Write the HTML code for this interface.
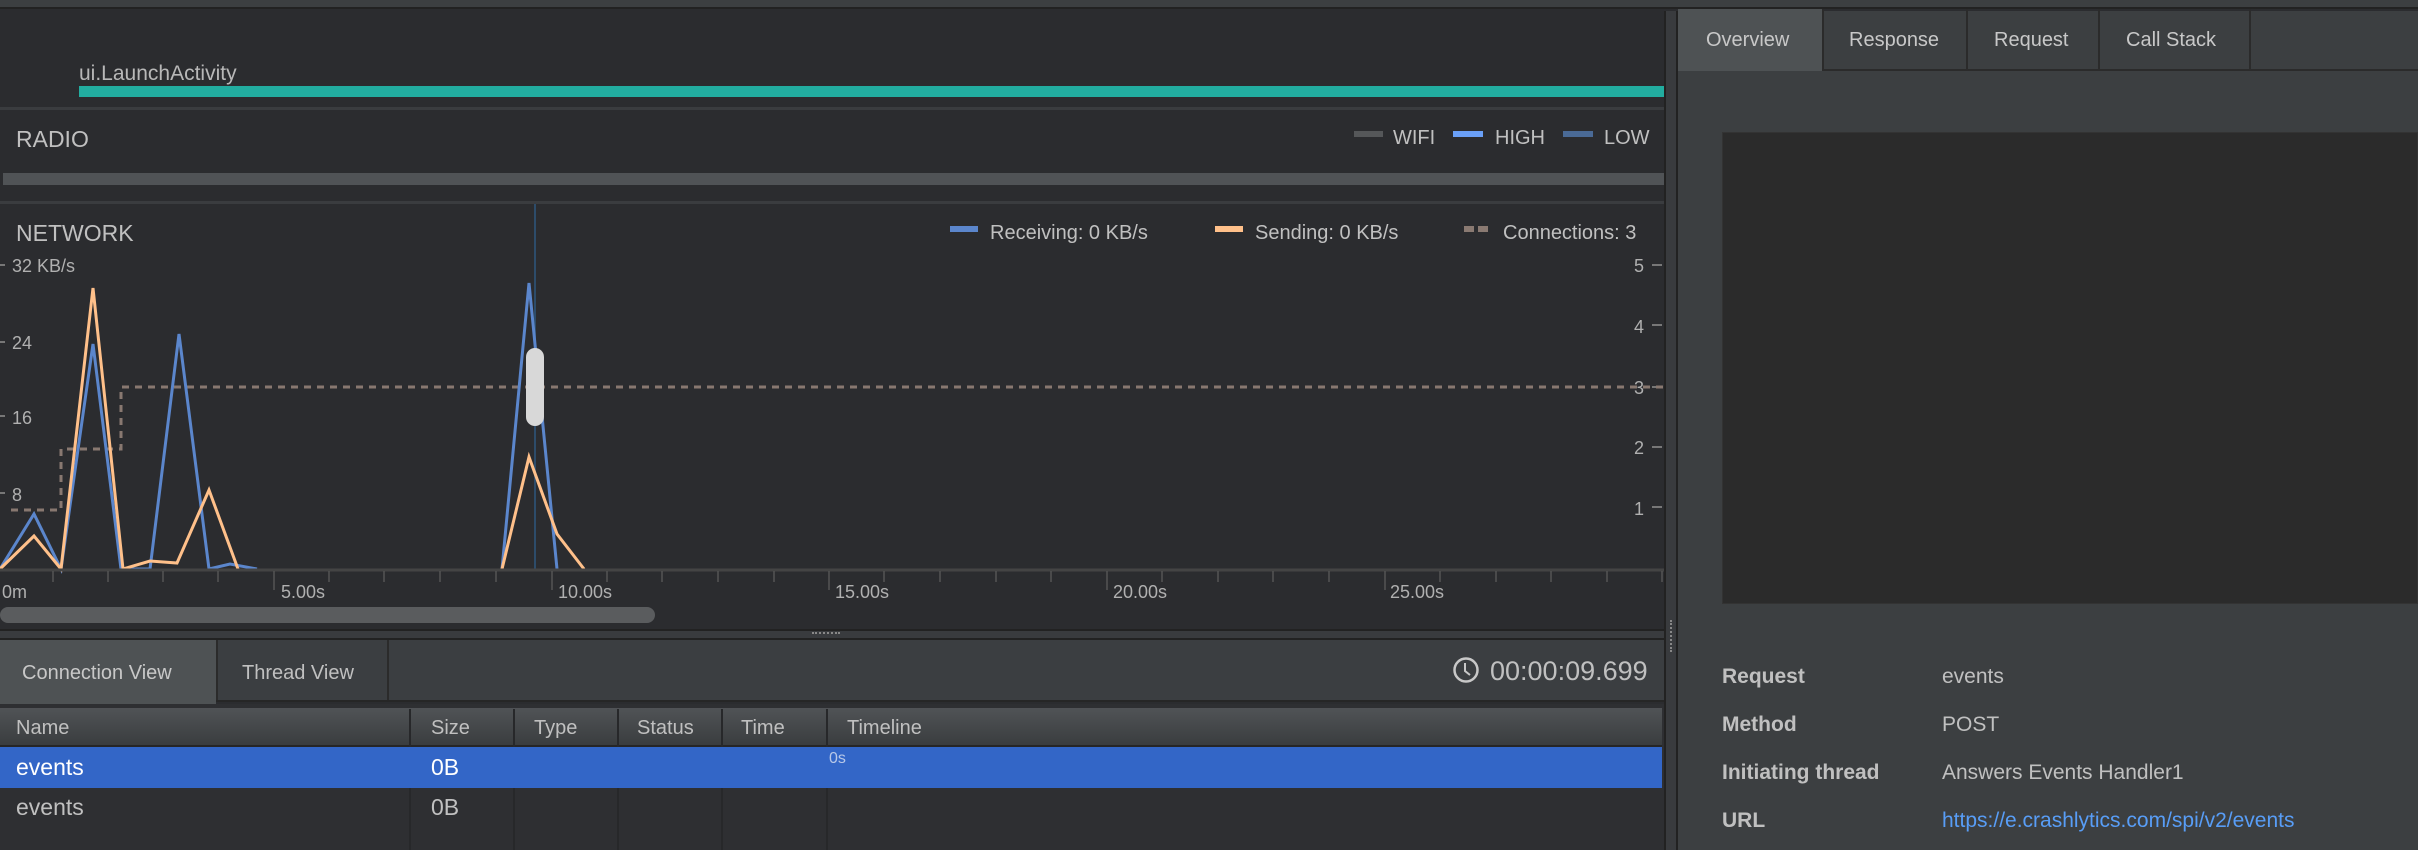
<!DOCTYPE html>
<html><head><meta charset="utf-8"><style>
*{margin:0;padding:0;box-sizing:border-box}
body{width:2418px;height:850px;overflow:hidden;background:#2b2c2f;font-family:"Liberation Sans","DejaVu Sans",sans-serif;color:#bbbbbb;position:relative}
.a{position:absolute}
</style></head><body>
<div class="a" style="left:0;top:0;width:2418px;height:9px;background:#3c3f41;border-bottom:2px solid #222"></div>
<div class="a" style="left:0;top:11px;width:1665px;height:97px;background:#2b2c2f"></div>
<div class="a" style="left:79px;top:62px;font-size:21px;color:#b8b8b8">ui.LaunchActivity</div>
<div class="a" style="left:79px;top:86px;width:1585px;height:11px;background:#22ada0"></div>
<div class="a" style="left:0;top:107px;width:1665px;height:3px;background:#3a3c3f"></div>
<div class="a" style="left:16px;top:126px;font-size:23px;color:#c0c0c0">RADIO</div>
<div class="a" style="left:1354px;top:131px;width:29px;height:6px;background:#555759"></div>
<div class="a" style="left:1393px;top:127px;font-size:20px;color:#c0c0c0">WIFI</div>
<div class="a" style="left:1453px;top:131px;width:30px;height:6px;background:#6aa0f8"></div>
<div class="a" style="left:1495px;top:127px;font-size:20px;color:#c0c0c0">HIGH</div>
<div class="a" style="left:1563px;top:131px;width:30px;height:6px;background:#4a6a96"></div>
<div class="a" style="left:1604px;top:127px;font-size:20px;color:#c0c0c0">LOW</div>
<div class="a" style="left:3px;top:173px;width:1661px;height:12px;background:#505356"></div>
<div class="a" style="left:0;top:201px;width:1665px;height:3px;background:#3a3c3f"></div>
<div class="a" style="left:16px;top:220px;font-size:23px;color:#c0c0c0">NETWORK</div>
<div class="a" style="left:950px;top:226px;width:28px;height:6px;background:#5b86cc"></div>
<div class="a" style="left:990px;top:222px;font-size:20px;color:#c0c0c0">Receiving: 0 KB/s</div>
<div class="a" style="left:1215px;top:226px;width:28px;height:6px;background:#ffc08a"></div>
<div class="a" style="left:1255px;top:222px;font-size:20px;color:#c0c0c0">Sending: 0 KB/s</div>
<div class="a" style="left:1464px;top:226px;width:10px;height:6px;background:#8a7a72"></div>
<div class="a" style="left:1478px;top:226px;width:10px;height:6px;background:#8a7a72"></div>
<div class="a" style="left:1503px;top:222px;font-size:20px;color:#c0c0c0">Connections: 3</div>
<svg class="a" style="left:0;top:204px" width="1665" height="425" viewBox="0 204 1665 425" font-family="Liberation Sans,sans-serif" font-size="18" fill="#b0b0b0">
<line x1="535" y1="204" x2="535" y2="569" stroke="#2d4c6a" stroke-width="2"/>
<g stroke="#777" stroke-width="2">
<line x1="0" y1="265" x2="5" y2="265"/><line x1="0" y1="342" x2="5" y2="342"/><line x1="0" y1="416" x2="5" y2="416"/><line x1="0" y1="493" x2="5" y2="493"/>
<line x1="1652" y1="265" x2="1662" y2="265"/><line x1="1652" y1="325" x2="1662" y2="325"/><line x1="1652" y1="387" x2="1662" y2="387"/><line x1="1652" y1="447" x2="1662" y2="447"/><line x1="1652" y1="507" x2="1662" y2="507"/>
</g>
<text x="12" y="272">32 KB/s</text><text x="12" y="349">24</text><text x="12" y="424">16</text><text x="12" y="501">8</text>
<text x="1634" y="272">5</text><text x="1634" y="333">4</text><text x="1634" y="394">3</text><text x="1634" y="454">2</text><text x="1634" y="515">1</text>
<polyline fill="none" stroke="#887870" stroke-width="3" stroke-dasharray="7,6" points="11,510 61,510 61,449 121,449 121,387 1665,387"/>
<polyline fill="none" stroke="#5b86cc" stroke-width="3" points="0,569 34,514 61,569 93,344 121,569 150,569 179,334 209,569 230,564 257,569"/>
<polyline fill="none" stroke="#5b86cc" stroke-width="3" points="502,569 529,283 557,569"/>
<polyline fill="none" stroke="#ffc08a" stroke-width="3" points="0,569 34,536 61,569 93,288 123,569 150,561 177,563 209,490 238,569"/>
<polyline fill="none" stroke="#ffc08a" stroke-width="3" points="502,569 529,457 557,534 584,569"/>
<rect x="526" y="348" width="18" height="78" rx="9" fill="#d8d8d8"/>
<line x1="0" y1="570" x2="1665" y2="570" stroke="#444" stroke-width="3"/>
<g stroke="#555" stroke-width="1.5">
<line x1="53" y1="571" x2="53" y2="582"/><line x1="108" y1="571" x2="108" y2="582"/><line x1="163" y1="571" x2="163" y2="582"/><line x1="218" y1="571" x2="218" y2="582"/><line x1="274" y1="571" x2="274" y2="590"/>
<line x1="329" y1="571" x2="329" y2="582"/><line x1="384" y1="571" x2="384" y2="582"/><line x1="440" y1="571" x2="440" y2="582"/><line x1="496" y1="571" x2="496" y2="582"/><line x1="552" y1="571" x2="552" y2="590"/>
<line x1="607" y1="571" x2="607" y2="582"/><line x1="662" y1="571" x2="662" y2="582"/><line x1="718" y1="571" x2="718" y2="582"/><line x1="774" y1="571" x2="774" y2="582"/><line x1="829" y1="571" x2="829" y2="590"/>
<line x1="884" y1="571" x2="884" y2="582"/><line x1="940" y1="571" x2="940" y2="582"/><line x1="996" y1="571" x2="996" y2="582"/><line x1="1051" y1="571" x2="1051" y2="582"/><line x1="1107" y1="571" x2="1107" y2="590"/>
<line x1="1162" y1="571" x2="1162" y2="582"/><line x1="1218" y1="571" x2="1218" y2="582"/><line x1="1273" y1="571" x2="1273" y2="582"/><line x1="1329" y1="571" x2="1329" y2="582"/><line x1="1385" y1="571" x2="1385" y2="590"/>
<line x1="1440" y1="571" x2="1440" y2="582"/><line x1="1496" y1="571" x2="1496" y2="582"/><line x1="1551" y1="571" x2="1551" y2="582"/><line x1="1607" y1="571" x2="1607" y2="582"/><line x1="1662" y1="571" x2="1662" y2="582"/>
</g>
<text x="2" y="598">0m</text><text x="281" y="598">5.00s</text><text x="558" y="598">10.00s</text><text x="835" y="598">15.00s</text><text x="1113" y="598">20.00s</text><text x="1390" y="598">25.00s</text>
<rect x="0" y="607" width="655" height="16" rx="8" fill="#5a5c5e"/>
</svg>
<div class="a" style="left:0;top:629px;width:1665px;height:11px;background:#393b3e;border-top:2px solid #222;border-bottom:2px solid #222"></div>
<div class="a" style="left:812px;top:632px;width:28px;height:4px;border-top:2px dotted #888"></div>
<div class="a" style="left:0;top:640px;width:1665px;height:62px;background:#3b3e41;border-bottom:2px solid #262626"></div>
<div class="a" style="left:0;top:640px;width:216px;height:66px;background:#4e5254;font-size:20px;color:#c8c8c8;padding:22px 0 0 22px">Connection View</div>
<div class="a" style="left:216px;top:640px;width:173px;height:60px;border-left:2px solid #2b2b2b;border-right:2px solid #2b2b2b;font-size:20px;color:#c0c0c0;padding:22px 0 0 24px">Thread View</div>
<svg class="a" style="left:1452px;top:656px" width="28" height="28"><circle cx="14" cy="14" r="11.5" fill="none" stroke="#c8c8c8" stroke-width="2.5"/><path d="M13 7 V15 L18 19" fill="none" stroke="#c8c8c8" stroke-width="2"/></svg>
<div class="a" style="left:1490px;top:656px;font-size:27px;color:#c0c0c0">00:00:09.699</div>
<div class="a" style="left:0;top:704px;width:1665px;height:146px;background:#2e2f32"></div>
<div class="a" style="left:0;top:708px;width:1662px;height:39px;background:linear-gradient(#505356,#3a3d3f);border-bottom:2px solid #262626"></div>
<div class="a" style="left:409px;top:709px;width:2px;height:141px;background:#27282a"></div>
<div class="a" style="left:513px;top:709px;width:2px;height:141px;background:#27282a"></div>
<div class="a" style="left:617px;top:709px;width:2px;height:141px;background:#27282a"></div>
<div class="a" style="left:721px;top:709px;width:2px;height:141px;background:#27282a"></div>
<div class="a" style="left:826px;top:709px;width:2px;height:141px;background:#27282a"></div>
<div class="a" style="left:0;top:747px;width:1662px;height:41px;background:#3366c7"></div>
<div class="a" style="top:717px;font-size:20px;color:#c0c0c0;left:16px">Name</div>
<div class="a" style="top:717px;font-size:20px;color:#c0c0c0;left:431px">Size</div>
<div class="a" style="top:717px;font-size:20px;color:#c0c0c0;left:534px">Type</div>
<div class="a" style="top:717px;font-size:20px;color:#c0c0c0;left:637px">Status</div>
<div class="a" style="top:717px;font-size:20px;color:#c0c0c0;left:741px">Time</div>
<div class="a" style="top:717px;font-size:20px;color:#c0c0c0;left:847px">Timeline</div>
<div class="a" style="top:754px;font-size:23px;color:#fff;left:16px">events</div>
<div class="a" style="top:754px;font-size:23px;color:#fff;left:431px">0B</div>
<div class="a" style="top:750px;font-size:16px;color:#b8c8e8;left:829px">0s</div>
<div class="a" style="top:794px;font-size:23px;color:#c0c0c0;left:16px">events</div>
<div class="a" style="top:794px;font-size:23px;color:#c0c0c0;left:431px">0B</div>
<div class="a" style="left:1664px;top:11px;width:14px;height:839px;background:#393b3e;border-left:2px solid #222;border-right:2px solid #222"></div>
<div class="a" style="left:1670px;top:620px;width:3px;height:32px;border-left:2px dotted #888"></div>
<div class="a" style="left:1678px;top:11px;width:740px;height:839px;background:#3c3f41"></div>
<div class="a" style="left:1678px;top:69px;width:740px;height:2px;background:#2b2b2b"></div>
<div class="a" style="left:1678px;top:9px;width:144px;height:62px;background:#4e5254;font-size:20px;color:#c8c8c8;padding:20px 0 0 28px">Overview</div>
<div class="a" style="left:1822px;top:9px;width:146px;height:60px;border-left:2px solid #2b2b2b;border-right:2px solid #2b2b2b;font-size:20px;color:#c8c8c8;padding:20px 0 0 25px">Response</div>
<div class="a" style="left:1968px;top:9px;width:132px;height:60px;border-right:2px solid #2b2b2b;font-size:20px;color:#c8c8c8;padding:20px 0 0 26px">Request</div>
<div class="a" style="left:2100px;top:9px;width:151px;height:60px;border-right:2px solid #2b2b2b;font-size:20px;color:#c8c8c8;padding:20px 0 0 26px">Call Stack</div>
<div class="a" style="left:1722px;top:132px;width:696px;height:472px;background:#2b2b2b;border:1px solid #333"></div>
<div class="a" style="left:1722px;top:665px;font-size:21px;font-weight:bold;color:#c0c0c0">Request</div>
<div class="a" style="left:1722px;top:713px;font-size:21px;font-weight:bold;color:#c0c0c0">Method</div>
<div class="a" style="left:1722px;top:761px;font-size:21px;font-weight:bold;color:#c0c0c0">Initiating thread</div>
<div class="a" style="left:1722px;top:809px;font-size:21px;font-weight:bold;color:#c0c0c0">URL</div>
<div class="a" style="left:1942px;top:665px;font-size:21px;color:#c0c0c0">events</div>
<div class="a" style="left:1942px;top:713px;font-size:21px;color:#c0c0c0">POST</div>
<div class="a" style="left:1942px;top:761px;font-size:21px;color:#c0c0c0">Answers Events Handler1</div>
<div class="a" style="left:1942px;top:809px;font-size:21px;color:#589df6">https://e.crashlytics.com/spi/v2/events</div>
</body></html>
